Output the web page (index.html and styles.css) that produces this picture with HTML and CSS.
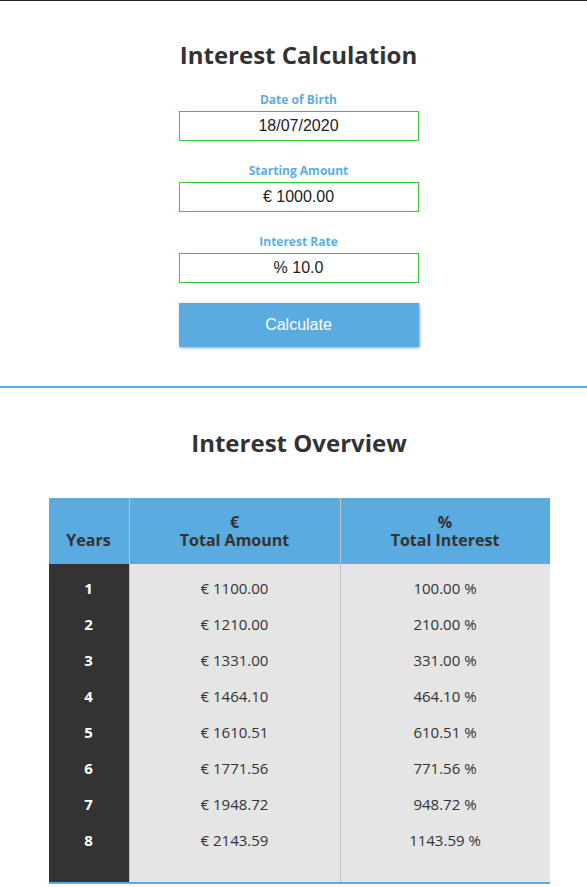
FILE: index.html
```html
<!DOCTYPE html>
<html lang="en">
<head>
<meta charset="utf-8">
<title>Interest Calculation</title>
<link rel="stylesheet" href="styles.css">
</head>
<body>
<section class="calc">
  <div class="inner">
    <h1 class="title">Interest Calculation</h1>
    <form class="form">
      <div class="field">
        <label class="label" for="dob">Date of Birth</label>
        <input class="input" id="dob" type="text" value="18/07/2020">
      </div>
      <div class="field">
        <label class="label" for="amount">Starting Amount</label>
        <input class="input" id="amount" type="text" value="€ 1000.00">
      </div>
      <div class="field">
        <label class="label" for="rate">Interest Rate</label>
        <input class="input" id="rate" type="text" value="% 10.0">
      </div>
      <button class="btn" type="button">Calculate</button>
    </form>
  </div>
</section>
<section class="overview">
  <div class="inner inner-table">
    <h2 class="title">Interest Overview</h2>
    <table class="table">
      <thead>
        <tr>
          <th class="col-year">Years</th>
          <th class="col-amount"><span class="unit">€</span>Total Amount</th>
          <th class="col-interest"><span class="unit">%</span>Total Interest</th>
        </tr>
      </thead>
      <tbody>
        <tr><td class="year">1</td><td>€ 1100.00</td><td>100.00 %</td></tr>
        <tr><td class="year">2</td><td>€ 1210.00</td><td>210.00 %</td></tr>
        <tr><td class="year">3</td><td>€ 1331.00</td><td>331.00 %</td></tr>
        <tr><td class="year">4</td><td>€ 1464.10</td><td>464.10 %</td></tr>
        <tr><td class="year">5</td><td>€ 1610.51</td><td>610.51 %</td></tr>
        <tr><td class="year">6</td><td>€ 1771.56</td><td>771.56 %</td></tr>
        <tr><td class="year">7</td><td>€ 1948.72</td><td>948.72 %</td></tr>
        <tr><td class="year">8</td><td>€ 2143.59</td><td>1143.59 %</td></tr>
      </tbody>
    </table>
  </div>
</section>
</body>
</html>
```
FILE: styles.css
```css
html, body {
  margin: 0;
  padding: 0;
  background: #fff;
}
body {
  border-top: 1px solid #222;
  font-family: "Open Sans", "Liberation Sans", Arial, sans-serif;
  color: #333;
}
.inner {
  padding-left: 10px;
  display: flex;
  flex-direction: column;
  align-items: center;
}
.inner-table {
  padding-left: 11px;
}
.calc {
  padding: 37px 0 39px;
  border-bottom: 2px solid #5aabe0;
}
.title {
  margin: 0;
  font-size: 24px;
  line-height: 33px;
  font-weight: 700;
  color: #333;
  text-align: center;
}
.form {
  margin-top: 20px;
  display: flex;
  flex-direction: column;
  align-items: center;
}
.field {
  display: flex;
  flex-direction: column;
  align-items: center;
  margin-bottom: 21px;
}
.field:last-of-type {
  margin-bottom: 20px;
}
.label {
  font-size: 12px;
  line-height: 16px;
  font-weight: 700;
  color: #5dade2;
  padding-top: 1px;
  margin-bottom: 3px;
}
.input {
  box-sizing: border-box;
  width: 240px;
  height: 30px;
  margin: 0;
  padding: 0 6px;
  border: 1px solid #33cc33;
  background: #fff;
  font-family: "Liberation Sans", Arial, sans-serif;
  font-size: 16px;
  color: #222;
  text-align: center;
  outline: none;
}
.btn {
  box-sizing: border-box;
  width: 240px;
  height: 44px;
  margin: 0;
  border: none;
  background: #5aabe0;
  color: #fff;
  font-family: "Liberation Sans", Arial, sans-serif;
  font-size: 16px;
  box-shadow: 1px 1px 3px rgba(0, 0, 0, 0.35);
  cursor: pointer;
}
.overview {
  padding-top: 38px;
}
.table {
  margin-top: 39px;
  width: 499px;
  border-collapse: collapse;
  table-layout: fixed;
  border-bottom: 2px solid #5aabe0;
}
.col-year { width: 80px; }
.col-amount { width: 210px; }
.col-interest { width: 209px; }
.table th {
  background: #5aabe0;
  color: #333;
  font-size: 16px;
  font-weight: 700;
  line-height: 18px;
  padding: 15px 0;
  vertical-align: bottom;
  text-align: center;
}
.unit {
  display: block;
}
.table th + th,
.table td + td {
  border-left: 1px solid #c2c2c2;
}
.table td {
  background: #e5e5e5;
  font-size: 15px;
  line-height: 20px;
  padding: 8px 0;
  text-align: center;
  color: #333;
}
.table td.year {
  background: #333;
  color: #fff;
  font-weight: 700;
}
.table tbody tr:first-child td {
  padding-top: 14px;
}
.table tbody tr:last-child td {
  padding-bottom: 32px;
}
```
